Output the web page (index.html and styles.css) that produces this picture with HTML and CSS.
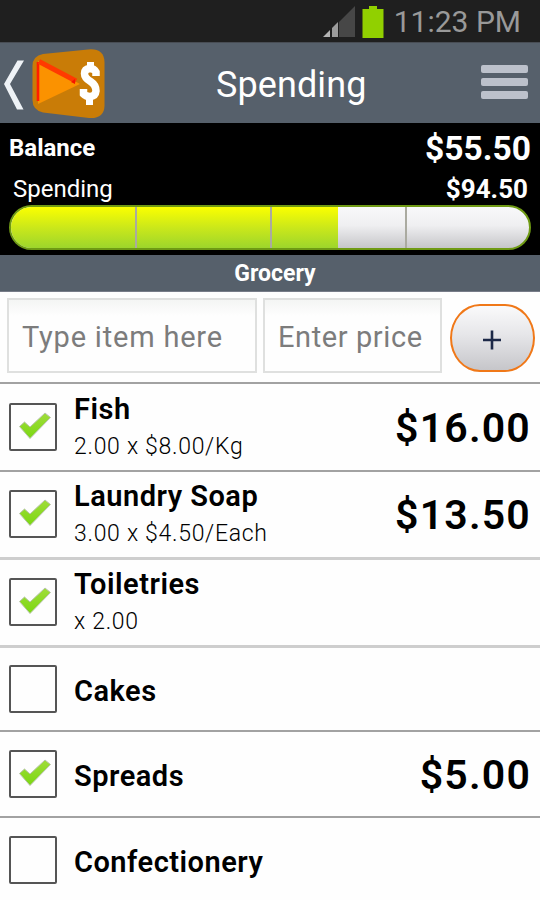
FILE: index.html
```
<!DOCTYPE html>
<html lang="en">
<head>
  <meta charset="UTF-8" />
  <meta name="viewport" content="width=device-width, initial-scale=1.0"/>
  <title>Spending</title>
  <link rel="stylesheet" href="styles.css">
</head>
<body>
  <div class="status-bar">
    <svg class="signal-icon" width="32" height="31" viewBox="0 0 32 31">
      <path d="M16 16 L32 0 V31 H16 Z" fill="#474747"/>
      <path d="M0 31 L7 24 V31 Z" fill="#b4b4b4"/>
      <path d="M9 22 L15 16 V31 H9 Z" fill="#9c9c9c"/>
    </svg>
    <svg class="battery-icon" width="22" height="32" viewBox="0 0 22 32">
      <path d="M7 0 H15 V3 H21.500 V32 H0.500 V3 H7 Z" fill="#91d000"/>
    </svg>
    <span class="clock">11:23 PM</span>
  </div>

  <header class="app-bar">
    <svg class="back-icon" width="22" height="50" viewBox="0 0 22 50">
      <path d="M15.500 0.500 H22 L8 24 L21.500 49.500 H15 L2 24 Z" fill="#eef2f6"/>
    </svg>
    <svg class="app-logo" width="74" height="70" viewBox="0 0 74 70">
      <path d="M11 5 L56 0.500 Q72 -1 72.500 13 V57 Q72 70 57 69 L11 63.500 Q0.500 61 0.500 51 V17 Q0.500 7 11 5 Z" fill="#c97c07"/>
      <path d="M6 12 L48 35 L6 55 Z" fill="#fb9200"/>
      <path d="M6 52 V13" stroke="#ff1d00" stroke-width="2.600" fill="none"/>
      <path d="M7 12.500 L44 32" stroke="#ff3a00" stroke-width="5" fill="none"/>
      <path d="M39 33 L43 30 L43 35 Z" fill="#f51400"/>
      <path d="M64 27 V23 Q62 19.500 58 19.500 Q52.500 20 52.500 24.500 Q52.500 29 58.500 32.500 Q64 36 64 42 Q63.500 47.500 58 47.500 Q54 47.500 51.500 45 V40" stroke="#fff" stroke-width="7.500" fill="none"/>
      <path d="M55 13 H62 V20 H55 Z M54 46 H61 V56 H54 Z" fill="#fff"/>
    </svg>
    <h1>Spending</h1>
    <div class="menu-icon">
      <span></span>
      <span></span>
      <span></span>
    </div>
  </header>

  <section class="summary">
    <div class="summary-row balance">
      <span>Balance</span>
      <span class="amount">$55.50</span>
    </div>
    <div class="summary-row spending">
      <span>Spending</span>
      <span class="amount">$94.50</span>
    </div>
    <div class="progress">
      <div class="progress-fill" style="width: 63.2%"></div>
      <div class="progress-ticks"><i></i><i></i><i></i><i></i></div>
    </div>
  </section>

  <h2 class="category">Grocery</h2>

  <form class="add-form">
    <input class="item-input" type="text" placeholder="Type item here">
    <input class="price-input" type="text" placeholder="Enter price">
    <button class="add-btn" type="button" aria-label="Add">
      <svg width="20" height="20" viewBox="0 0 20 20">
        <path d="M9 0.500 V19.500 M0 10 H18" stroke="#1d2948" stroke-width="2.600"/>
      </svg>
    </button>
  </form>

  <svg width="0" height="0" class="defs">
    <linearGradient id="green" x1="0" y1="0" x2="0" y2="1">
      <stop offset="0" stop-color="#a0dc3c"/>
      <stop offset="1" stop-color="#7bd812"/>
    </linearGradient>
    <symbol id="tick" viewBox="0 0 34 28">
      <path d="M1.500 14.500 L6.500 10 L12 15 L27 1 L32.500 5.500 L12 26.500 Z" fill="url(#green)" stroke="#b9c4ae" stroke-width="1" stroke-linejoin="round"/>
    </symbol>
  </svg>

  <ul class="item-list">
    <li class="item">
      <span class="checkbox"><svg><use href="#tick"/></svg></span>
      <div class="item-text">
        <div class="item-name">Fish</div>
        <div class="item-qty">2.00 x $8.00/Kg</div>
      </div>
      <span class="item-price">$16.00</span>
    </li>
    <li class="item">
      <span class="checkbox"><svg><use href="#tick"/></svg></span>
      <div class="item-text">
        <div class="item-name">Laundry Soap</div>
        <div class="item-qty">3.00 x $4.50/Each</div>
      </div>
      <span class="item-price">$13.50</span>
    </li>
    <li class="item soft">
      <span class="checkbox"><svg><use href="#tick"/></svg></span>
      <div class="item-text">
        <div class="item-name">Toiletries</div>
        <div class="item-qty">x 2.00</div>
      </div>
    </li>
    <li class="item short soft">
      <span class="checkbox"></span>
      <div class="item-text">
        <div class="item-name">Cakes</div>
      </div>
    </li>
    <li class="item short">
      <span class="checkbox"><svg><use href="#tick"/></svg></span>
      <div class="item-text">
        <div class="item-name">Spreads</div>
      </div>
      <span class="item-price">$5.00</span>
    </li>
    <li class="item short">
      <span class="checkbox"></span>
      <div class="item-text">
        <div class="item-name">Confectionery</div>
      </div>
    </li>
  </ul>
</body>
</html>
```
FILE: styles.css
```
* {
  box-sizing: border-box;
}

body {
  margin: 0;
  height: 900px;
  overflow: hidden;
  background-color: #fefefe;
  font-family: Roboto, "Liberation Sans", sans-serif;
  color: #000;
}

.status-bar {
  display: flex;
  justify-content: flex-end;
  align-items: flex-start;
  height: 42px;
  padding: 6px 19px 0 0;
  background-color: #1f1f1f;
}

.battery-icon {
  margin: 0 10px 0 7px;
}

.clock {
  font-size: 30px;
  line-height: 31px;
  color: #999;
}

.app-bar {
  display: flex;
  align-items: center;
  height: 81px;
  padding: 2px 12px 0 2px;
  background-color: #56606b;
  border-top: 1px solid #484d54;
}

.back-icon {
  margin: 2px 7px 0 0;
}

.app-logo {
  margin-left: 1px;
}

.app-bar h1 {
  flex: 1;
  margin: 2px 0 0;
  padding-left: 110px;
  font-size: 36px;
  line-height: 42px;
  font-weight: 400;
  letter-spacing: 0.1px;
  color: #fff;
}

.menu-icon {
  display: flex;
  flex-direction: column;
  gap: 5px;
  width: 47px;
  margin-top: -4px;
}

.menu-icon span {
  height: 8px;
  border-radius: 2px;
  background-color: #bcc1cb;
}

.summary {
  height: 132px;
  padding: 5px 9px 0;
  background-color: #000;
  color: #fff;
}

.summary-row {
  display: flex;
  justify-content: space-between;
  align-items: center;
}

.balance {
  height: 40px;
  font-size: 24px;
  font-weight: 700;
}

.balance .amount {
  font-size: 33.6px;
}

.spending {
  height: 37px;
  padding: 5px 3px 0 4px;
  font-size: 24px;
}

.spending .amount {
  font-size: 26px;
  font-weight: 700;
}

.progress {
  position: relative;
  height: 45px;
  border: 2px solid #6f9a14;
  border-radius: 23px;
  overflow: hidden;
  background: linear-gradient(#f8f8fa, #efeff1 45%, #c6c6c9);
}

.progress-fill {
  height: 100%;
  background: linear-gradient(#fbff00, #cbe81a 50%, #9dd62c);
}

/* quarter marks over the bar */
.progress-ticks {
  position: absolute;
  inset: 0 -13px 0 -9px;
  display: flex;
}

.progress-ticks i {
  flex: 1;
  border-right: 2px solid #aaaaa0;
}

.category {
  height: 37px;
  margin: 0;
  padding-left: 10px;
  background-color: #56606b;
  border-bottom: 1px solid #777c88;
  font-size: 23px;
  line-height: 38px;
  font-weight: 700;
  text-align: center;
  color: #fff;
}

.add-form {
  display: flex;
  align-items: flex-start;
  height: 90px;
  padding: 6px 5px 0 7px;
}

.add-form input {
  height: 75px;
  padding: 2px 0 0 14px;
  border: 2px solid #dfe0df;
  border-radius: 0;
  background: linear-gradient(#f4f5f4, #fefefe 16px);
  font-family: inherit;
  font-size: 29px;
  letter-spacing: 0.8px;
}

.add-form input::placeholder {
  color: #7c7c7c;
}

.add-form .item-input {
  width: 250px;
  padding-left: 13px;
}

.add-form .price-input {
  width: 179px;
  margin: 0 8px 0 6px;
  padding-left: 13px;
  letter-spacing: 0.6px;
}

.add-btn {
  display: flex;
  justify-content: center;
  align-items: center;
  width: 85px;
  height: 68px;
  margin-top: 6px;
  padding: 3px 0 0;
  border: 2px solid #f07818;
  border-radius: 30px / 34px;
  background: linear-gradient(#fafafb, #e6e6e9 45%, #c6c6ca);
}

.defs {
  position: absolute;
}

.item-list {
  margin: 0;
  padding: 0;
  list-style: none;
}

.item {
  display: flex;
  align-items: center;
  height: 87.6px;
  padding: 0 9px;
  border-top: 2px solid #a2a2a2;
}

.item.short {
  height: 86px;
}

.item.soft {
  border-top: 3px solid #cecece;
}

.item.short.soft {
  height: 85px;
}

.checkbox {
  width: 48px;
  height: 48px;
  padding: 7px;
  border: 2px solid #555;
  border-radius: 2px;
}

.checkbox svg {
  display: block;
  width: 34px;
  height: 28px;
}

.item-text {
  flex: 1;
  padding: 3px 0 0 17px;
}

.item.short .item-text {
  padding-top: 4px;
}

.item-name {
  font-size: 29px;
  line-height: 36px;
  font-weight: 600;
  letter-spacing: 0.5px;
}

.item-qty {
  font-size: 23px;
  line-height: 39px;
  font-weight: 300;
  letter-spacing: 0.7px;
}

.item-price {
  padding-top: 2px;
  font-size: 41px;
  font-weight: 600;
  letter-spacing: 1.2px;
}
```
